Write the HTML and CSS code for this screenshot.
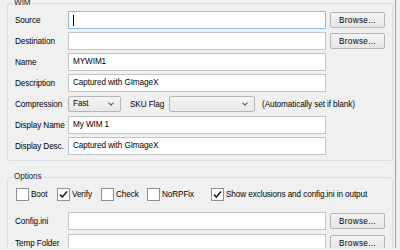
FILE: index.html
```html
<!DOCTYPE html>
<html lang="en">
<head>
    <meta charset="UTF-8">
    <meta name="viewport" content="width=device-width, initial-scale=1.0">
    <title>GImageX - Capture</title>
    <link rel="stylesheet" href="styles.css">
</head>
<body>
    <div class="window">
        <fieldset class="group group-wim">
            <legend>WIM</legend>
            <div class="form">
                <label class="lbl">Source</label>
                <div class="field focused"><span class="caret"></span></div>
                <button class="btn">Browse...</button>

                <label class="lbl">Destination</label>
                <div class="field"></div>
                <button class="btn">Browse...</button>

                <label class="lbl">Name</label>
                <div class="field">MYWIM1</div>
                <span></span>

                <label class="lbl">Description</label>
                <div class="field">Captured with GImageX</div>
                <span></span>

                <label class="lbl">Compression</label>
                <div class="combo-row">
                    <div class="combo combo-small">Fast<span class="chev"></span></div>
                    <span class="lbl sku-lbl">SKU Flag</span>
                    <div class="combo combo-sku"><span class="chev"></span></div>
                    <span class="hint">(Automatically set if blank)</span>
                </div>

                <label class="lbl">Display Name</label>
                <div class="field">My WIM 1</div>
                <span></span>

                <label class="lbl">Display Desc.</label>
                <div class="field">Captured with GImageX</div>
                <span></span>
            </div>
        </fieldset>

        <fieldset class="group group-options">
            <legend>Options</legend>
            <div class="checks">
                <label class="chk"><span class="box"></span>Boot</label>
                <label class="chk"><span class="box checked"><svg viewBox="0 0 11 11"><path d="M2 5.5 L4.3 8 L9 2.5"/></svg></span>Verify</label>
                <label class="chk"><span class="box"></span>Check</label>
                <label class="chk"><span class="box"></span>NoRPFix</label>
                <label class="chk chk-show"><span class="box checked"><svg viewBox="0 0 11 11"><path d="M2 5.5 L4.3 8 L9 2.5"/></svg></span>Show exclusions and config.ini in output</label>
            </div>
            <div class="form form-options">
                <label class="lbl">Config.ini</label>
                <div class="field"></div>
                <button class="btn">Browse...</button>

                <label class="lbl">Temp Folder</label>
                <div class="field"></div>
                <button class="btn">Browse...</button>
            </div>
        </fieldset>
    </div>
</body>
</html>
```

FILE: styles.css
```css
body {
    margin: 0;
    background-color: #f0f0f0;
    font-family: 'Liberation Sans', Arial, sans-serif;
    font-size: 8.2px;
    letter-spacing: -0.1px;
    color: #000;
    overflow: hidden;
}

.window {
    width: 396px;
    height: 250px;
    border-right: 1px solid #a0a0a0;
    padding-left: 7px;
    box-sizing: border-box;
}

/* group boxes */
.group {
    margin: 0;
    width: 386px;
    box-sizing: border-box;
    border: 1px solid #d5dfe5;
    border-radius: 3px;
    padding: 3px 7px 5px 7px;
}

.group legend {
    padding: 0 1px;
    margin-left: -2px;
    line-height: 10px;
    color: #1e1e1e;
}

.group-wim {
    margin-top: -2px;
}

.group-options {
    margin-top: 11px;
    padding-top: 6px;
}

/* form grid */
.form {
    display: grid;
    grid-template-columns: 49px 258px 55px;
    grid-auto-rows: 18px;
    column-gap: 4px;
    row-gap: 3px;
    align-items: center;
}

.form-options {
    margin-top: 11px;
    row-gap: 4px;
}

.lbl {
    white-space: nowrap;
}

.field {
    height: 18px;
    box-sizing: border-box;
    border: 1px solid #c4c4c4;
    background: #fff;
    padding: 0 4px;
    line-height: 16px;
    display: flex;
    align-items: center;
}

.field.focused {
    border-color: #8cb8e6;
}

.caret {
    display: inline-block;
    width: 1px;
    height: 11px;
    background: #000;
}

.btn {
    height: 16px;
    padding: 0;
    margin: 0;
    border: 1px solid #b4b4b4;
    border-radius: 2px;
    background: linear-gradient(#f4f4f4, #e6e6e6);
    font-family: inherit;
    font-size: inherit;
    color: #000;
    letter-spacing: 0.3px;
}

/* compression row */
.combo-row {
    grid-column: 2 / 4;
    display: flex;
    align-items: center;
    height: 18px;
}

.combo {
    position: relative;
    height: 16px;
    box-sizing: border-box;
    border: 1px solid #b4b4b4;
    border-radius: 2px;
    background: linear-gradient(#f4f4f4, #e8e8e8);
    line-height: 14px;
    padding-left: 4px;
}

.combo-small {
    width: 53px;
}

.combo-sku {
    width: 86px;
}

.chev {
    position: absolute;
    right: 7px;
    top: 4px;
    width: 3px;
    height: 3px;
    border-right: 1px solid #555;
    border-bottom: 1px solid #555;
    transform: rotate(45deg);
}

.sku-lbl {
    margin-left: 9px;
    width: 39px;
}

.hint {
    margin-left: 7px;
    white-space: nowrap;
}

/* checkboxes */
.checks {
    display: flex;
    align-items: center;
    height: 13px;
    padding-left: 1px;
}

.chk {
    display: flex;
    align-items: center;
    white-space: nowrap;
}

.box {
    width: 11px;
    height: 11px;
    border: 1px solid #8f8f8f;
    background: #fff;
    margin-right: 2px;
    display: flex;
    align-items: center;
    justify-content: center;
}

.box svg {
    width: 11px;
    height: 11px;
}

.box svg path {
    fill: none;
    stroke: #222;
    stroke-width: 1.6;
}

.chk:nth-child(1) { width: 41px; }
.chk:nth-child(2) { width: 44px; }
.chk:nth-child(3) { width: 46px; }
.chk:nth-child(4) { width: 64px; }
```
